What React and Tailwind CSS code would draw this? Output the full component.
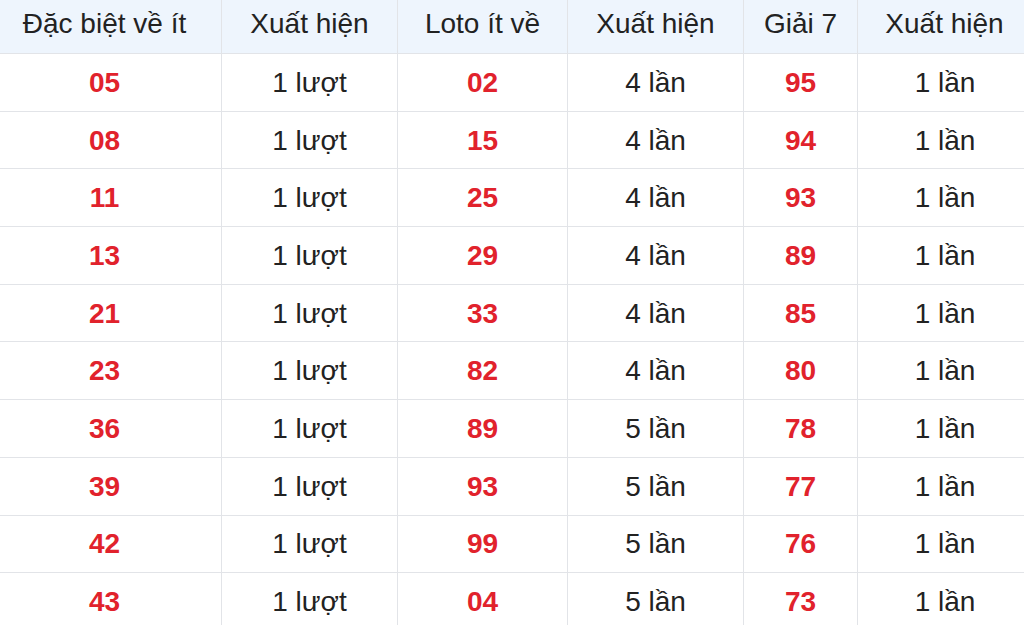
const rows = [
  ["05", "1 lượt", "02", "4 lần", "95", "1 lần"],
  ["08", "1 lượt", "15", "4 lần", "94", "1 lần"],
  ["11", "1 lượt", "25", "4 lần", "93", "1 lần"],
  ["13", "1 lượt", "29", "4 lần", "89", "1 lần"],
  ["21", "1 lượt", "33", "4 lần", "85", "1 lần"],
  ["23", "1 lượt", "82", "4 lần", "80", "1 lần"],
  ["36", "1 lượt", "89", "5 lần", "78", "1 lần"],
  ["39", "1 lượt", "93", "5 lần", "77", "1 lần"],
  ["42", "1 lượt", "99", "5 lần", "76", "1 lần"],
  ["43", "1 lượt", "04", "5 lần", "73", "1 lần"],
];

const headers = ["Đặc biệt về ít", "Xuất hiện", "Loto ít về", "Xuất hiện", "Giải 7", "Xuất hiện"];

function App() {
  return (
    <div className="w-[1024px] h-[625px] overflow-hidden bg-white font-['Liberation_Sans',Arial,sans-serif] text-[28px] text-[#222]">
      <div className="-ml-[12px] grid grid-cols-[234px_176px_170px_176px_114px_174px] w-[1044px]">
        {headers.map((h, i) => (
          <div
            key={i}
            className="h-[54px] pb-[5px] bg-[#eef5fd] border-b border-r border-[#e2e4e8] last:border-r-0 flex items-center justify-center whitespace-nowrap"
          >
            {h}
          </div>
        ))}
        {rows.map((r, ri) =>
          r.map((c, ci) => (
            <div
              key={ri + "-" + ci}
              className={
                "h-[57.7px] border-b border-r border-[#e2e4e8] flex items-center justify-center pt-[1px] " +
                (ci === 5 ? "border-r-0 " : "") +
                (ci % 2 === 0 ? "font-bold text-[#e1222c]" : "text-[#222]")
              }
            >
              {c}
            </div>
          ))
        )}
      </div>
    </div>
  );
}

export default App;
